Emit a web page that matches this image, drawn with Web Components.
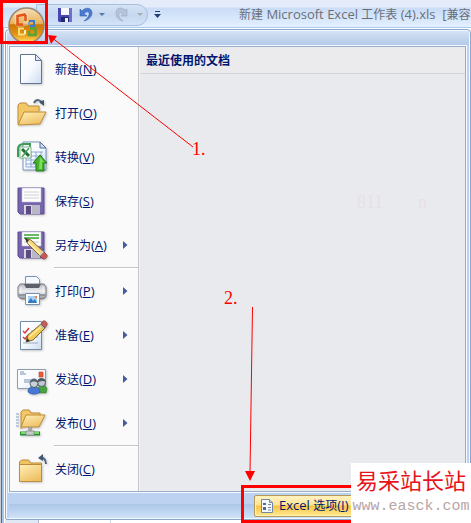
<!DOCTYPE html>
<html lang="zh-CN">
<head>
<meta charset="utf-8">
<title>新建 Microsoft Excel 工作表 (4).xls</title>
<style>
  body {
    margin: 0;
    overflow: hidden;
    font: 13px/16px "Open Sans", "Noto Sans CJK SC", sans-serif;
    color: #00156e;
  }
  /* 中文比西文小一号 */
  small { font-size: 12px; }
</style>
</head>
<body>
<office-window>
  <title-bar slot="title"><small>新建</small> Microsoft Excel <small>工作表</small> (4).xls&nbsp; [<small>兼容</small></title-bar>
  <office-menu>
    <menu-item icon="new"><small>新建</small>(<u>N</u>)</menu-item>
    <menu-item icon="open"><small>打开</small>(<u>O</u>)</menu-item>
    <menu-item icon="convert"><small>转换</small>(<u>V</u>)</menu-item>
    <menu-item icon="save"><small>保存</small>(<u>S</u>)</menu-item>
    <menu-item icon="saveas" more><small>另存为</small>(<u>A</u>)</menu-item>
    <menu-line></menu-line>
    <menu-item icon="print" more><small>打印</small>(<u>P</u>)</menu-item>
    <menu-item icon="prepare" more><small>准备</small>(<u>E</u>)</menu-item>
    <menu-item icon="send" more><small>发送</small>(<u>D</u>)</menu-item>
    <menu-item icon="publish" more><small>发布</small>(<u>U</u>)</menu-item>
    <menu-line></menu-line>
    <menu-item icon="close"><small>关闭</small>(<u>C</u>)</menu-item>
    <small slot="recent">最近使用的文档</small>
    <option-button slot="footer">Excel <small>选项</small>(<u>I</u>)</option-button>
  </office-menu>
  <office-button slot="over"></office-button>
  <step-marks slot="over"></step-marks>
  <site-mark slot="over">
    <span>易采站长站</span>
    <span slot="url">www.easck.com</span>
  </site-mark>
</office-window>

<script>
// 磁盘图标, 保存和另存为共用
const disk = `
  <path d="M2 3h26v26H4l-2-2z" fill="#7762ad" stroke="#5d4a94"/>
  <path d="M6 3h19v14H6z" fill="#fdfdfd" stroke="#c5c0d8" stroke-width=".6"/>
  <path d="M8 20h16v9H8z" fill="#d6d6de"/><path d="M10 21h5v8h-5z" fill="#5b4b80"/>
  <path d="M16 20h8v9h-8z" fill="#b9b8c6"/>`;

const pencil = `
  <path d="M9 9l3 6 14 14 4-4-15-14z" fill="#f5d77a" stroke="#77602c" stroke-width=".9"/>
  <path d="M11 12l15 15" stroke="#fff0b4" stroke-width="1.3"/>
  <path d="M9 9l4 2-2 3z" fill="#333"/>
  <path d="M24 27l4-4 3 3c1 2-2 5-4 4z" fill="#c95950" stroke="#774442" stroke-width=".7"/>
  <path d="M23 26l4-4 1 1-4 4z" fill="#c7d4cb"/>`;

const icons = {
  new: `
    <path d="M4.500 1.500h15l6 6v23h-21z" fill="url(#paper)" stroke="#62748f"/>
    <path d="M19.500 1.500v6h6z" fill="#dde9f8" stroke="#62748f"/>`,
  open: `
    <path d="M2 27V8l2-2h6l2 3h11v5" fill="#f3c765" stroke="#bd8b39"/>
    <path d="M2 28l6-13h22l-6 12z" fill="url(#fold)" stroke="#bd8b39"/>
    <path d="M18 6c2-4 7-4 8 1" fill="none" stroke="#51677f" stroke-width="2"/>
    <path d="M23 5l5 4 0-6z" fill="#405770"/>`,
  convert: `
    <path d="M7 1h17l6 6v22H7z" fill="url(#paper)" stroke="#7795be"/>
    <path d="M24 1v6h6z" fill="#cfe0f5" stroke="#536f96"/>
    <path d="M10 11h17M10 15h17M10 19h17M10 23h17M10 26h12M10 11v15M15 11v15M20 11v15M25 11v15" stroke="#8baad5"/>
    <path d="M2 16V8c0-4 3-5 6-5h6v4" fill="none" stroke="#3e9b52" stroke-width="2"/>
    <path d="M4 6h11v11H4z" fill="#fff" stroke="#7eb48a"/>
    <path d="M6 8l7 7" stroke="#206e33" stroke-width="3"/><path d="M13 7l-7 9" stroke="#49a25c" stroke-width="1.500"/>
    <path d="M24 14l7 8h-3v8h-8v-8h-3z" fill="#43b52c" stroke="#267319"/>
    <path d="M24 16l4 5h-2v7h-3z" fill="#82db5b"/>`,
  save: disk + `<path d="M8 7h15M8 10h15M8 13h15" stroke="#d2d2d2"/>`,
  saveas: disk + `<path d="M8 6h15M8 9h15" stroke="#36a333" stroke-width="1.500"/><path d="M8 13h15" stroke="#c8c8c8"/>` + pencil,
  print: `
    <path d="M9.500 12V1.500h11l3 3V12" fill="#f4f8ff" stroke="#7892b3"/>
    <path d="M4 9h24l2 3v8c0 3-2 4-5 4H7c-3 0-5-2-5-4v-8z" fill="url(#metal)" stroke="#777b83"/>
    <path d="M8 9h17l-2 4H10z" fill="#5d6066"/>
    <path d="M5 12v7M27 12v7" stroke="#f6f6f6"/>
    <path d="M3 20h26" stroke="#666a73"/>
    <path d="M9.500 18.500h14v11h-14z" fill="#fff" stroke="#7892b3"/>
    <path d="M12 21h9v7h-9z" fill="#a7d0f7"/><path d="M12 27l3-4 2 3 2-2 2 4h-9z" fill="#357bbd"/>
    <path d="M18 21h3v3z" fill="#e4864c"/>`,
  prepare: `
    <path d="M4.500 2.500h21v28h-21z" fill="url(#paper)" stroke="#758ba9"/>
    <path d="M7 12l2 2 4-5M7 18l2 2 4-5" fill="none" stroke="#d7383c" stroke-width="1.500"/>
    <path d="M7 24h15M15 12h6M15 18h7" stroke="#9cabc0"/>
    <path d="M10 23l2-7L25 5l4 4-12 12z" fill="#f3cb57" stroke="#7d662c"/>
    <path d="M13 18L26 7" stroke="#fff0a4" stroke-width="1.500"/>
    <path d="M10 23l1-4 3 3z" fill="#333"/>
    <path d="M25 5l2-3c2-1 5 2 4 4l-2 3z" fill="#c75d55" stroke="#7a4e4e" stroke-width=".7"/>
    <path d="M23 6l4 4 1-1-4-4z" fill="#aabdb6"/>`,
  send: `
    <path d="M1.500 6.500h28v19h-28z" fill="url(#paper)" stroke="#8e9cae"/>
    <path d="M4 9h4M4 11h6M8 17h9M8 19h7" stroke="#7890b5"/>
    <path d="M23 9h4v5h-4z" fill="#ef5c34" stroke="#c14325" stroke-width=".6"/>
    <path d="M22 30v-5c0-3 9-3 9 1l-1 4z" fill="#47a43e" stroke="#2d792b" stroke-width=".6"/>
    <circle cx="25.500" cy="19.500" r="4" fill="#c2cad0" stroke="#4f5d65"/>
    <path d="M21 20c0-6 8-6 9-1-3-2-6-1-9 1z" fill="#4d5b63"/>
    <path d="M12 29c0-5 3-5 6-5s6 1 6 5c-3 3-9 3-12 0z" fill="#4977d4" stroke="#2950a4" stroke-width=".6"/>
    <circle cx="18" cy="20.500" r="4" fill="#cbd2d7" stroke="#4f5d65"/>
    <path d="M14 20c0-6 8-6 8 0-3-2-5-2-8 0z" fill="#56666f"/>`,
  publish: `
    <path d="M0 7h3M0 10h3M0 13h3M0 16h3M0 19h3" stroke="#8ba2c4"/>
    <path d="M5 22V5l2-2h6l2 3h9v5" fill="#f3c765" stroke="#bd8b39"/>
    <path d="M5 20l5-12h19l-6 12z" fill="url(#fold)" stroke="#bd8b39"/>
    <path d="M14 20v5" stroke="#777" stroke-width="3"/><path d="M14 20v5" stroke="#ddd"/>
    <path d="M4 26.500h20" stroke="#268c34" stroke-width="4"/>
    <path d="M5 26h18" stroke="#76dd65" stroke-width="2"/>
    <rect x="10" y="24" width="8" height="4" fill="#c8cbd0" stroke="#777" stroke-width=".6"/>`,
  close: `
    <path d="M3.500 28V9l2-2h7l2 3h11v18z" fill="#f0c461" stroke="#bd8b39"/>
    <path d="M3.500 28.500v-17h22v17z" fill="url(#fold)" stroke="#bd8b39"/>
    <path d="M30 11c0-5-3-7-6-6" fill="none" stroke="#51677f" stroke-width="2"/>
    <path d="M22 5l5-4v7z" fill="#405770"/>`
};

const defs = `
  <defs>
    <linearGradient id="paper" x2="1" y2="1"><stop stop-color="#fff"/><stop offset=".5" stop-color="#f7faff"/><stop offset="1" stop-color="#cbdcf1"/></linearGradient>
    <linearGradient id="fold" x2=".6" y2="1"><stop stop-color="#fff0b8"/><stop offset="1" stop-color="#efc064"/></linearGradient>
    <linearGradient id="metal" x2="0" y2="1"><stop stop-color="#b9bdc5"/><stop offset=".5" stop-color="#eceef1"/><stop offset="1" stop-color="#8e939d"/></linearGradient>
  </defs>`;

function define(name, html) {
  customElements.define(name, class extends HTMLElement {
    constructor() {
      super();
      this.attachShadow({ mode: "open" }).innerHTML = html;
    }
  });
}

define("office-window", /*html*/`
  <style>
    :host {
      display: flex;
      flex-direction: column;
      position: relative;
      min-height: 100vh;
      overflow: hidden;
      background: linear-gradient(90deg, #c9ccd0 1px, #4a70a5 1px 2px, #a5c4ea 2px 4px, #fff 4px);
    }
    .body { flex: 1; display: flex; flex-direction: column; padding: 1px 0 0 5px; }
    .sheet {
      height: 3px;
      background: linear-gradient(90deg, #dfe8f5 33px, #aab8cc 33px 34px, #fff 34px 105px, #d0d7e5 105px 106px, #fff 106px);
    }
  </style>
  <slot name="title"></slot>
  <div class="body">
    <slot></slot>
    <div class="sheet"></div>
  </div>
  <slot name="over"></slot>
`);

define("title-bar", /*html*/`
  <style>
    :host {
      display: flex;
      align-items: center;
      box-sizing: border-box;
      height: 28px;
      padding: 2px 0 0 36px;
      border-bottom: 1px solid #a9cdef;
      background: linear-gradient(#e3ecf8 7px, #cadcf6 8px, #d9e8fb 20px, #e3f0ff);
      color: #696f79;
    }
    .quick {
      display: flex;
      align-items: center;
      box-sizing: border-box;
      width: 112px;
      height: 22px;
      padding-left: 20px;
      gap: 4px;
      border: 1px solid #a8bfdd;
      border-radius: 0 11px 11px 0;
      background: linear-gradient(#d5e3f5, #c5d8f0 50%, #d3e3f8);
    }
    button { display: flex; padding: 0; border: 0; background: none; }
    .redo { margin: 0 4px 0 6px; }
    .custom { margin-left: 6px; }
    .title {
      flex: 1;
      padding-left: 78px;
      overflow: hidden;
      white-space: nowrap;
    }
  </style>
  <div class="quick">
    <button aria-label="保存"><svg width="16" height="16" viewBox="0 0 16 16">
      <path d="M1 1h14v14H2l-1-1z" fill="#4845b5"/><path d="M4 1h8v7H4z" fill="#f7f9ff"/>
      <path d="M12 1h3v14h-3z" fill="#6f70cb"/><path d="M4 10h8v5H4z" fill="#222a68"/><path d="M8 11h3v4H8z" fill="#eef"/></svg></button>
    <button aria-label="撤消"><svg width="18" height="16" viewBox="0 0 18 16">
      <path d="M3 2v7h7L7 7c3-4 6-2 5 1-1 3-3 4-5 6 5-1 8-5 8-8 0-6-7-6-10-2z" fill="#4a7bd0" stroke="#3564b6" stroke-width=".6"/></svg></button>
    <button aria-label="撤消列表"><svg width="6" height="4"><path d="M0 0h6L3 3z" fill="#5379ad"/></svg></button>
    <button class="redo" aria-label="重做"><svg width="14" height="16" viewBox="0 0 14 16">
      <path d="M12 2v7H6l2-2C5 4 3 6 4 9c0 2 2 3 4 5-5-1-7-4-7-8 0-6 6-6 9-3z" fill="#b5c2d7" stroke="#98aac6" stroke-width=".6"/></svg></button>
    <button aria-label="重做列表"><svg width="6" height="4"><path d="M0 0h6L3 3z" fill="#a8acb4"/></svg></button>
  </div>
  <button class="custom" aria-label="自定义"><svg width="7" height="8"><path d="M1 0h5v1H1zM0 3h7L3.500 7z" fill="#243f75"/></svg></button>
  <div class="title"><slot></slot></div>
`);

define("office-menu", /*html*/`
  <style>
    :host {
      flex: 1;
      display: flex;
      flex-direction: column;
      padding: 16px 4px 1px 3px;
      border: 1px solid #8aa7cd;
      border-radius: 4px 4px 2px 2px;
      box-shadow: inset 0 0 0 1px #f2f8ff;
      background: linear-gradient(#d7e4f4, #b4cae8 15px, #bed3f1 16px, #bcd2f0);
    }
    .panes {
      flex: 1;
      display: flex;
      border: 1px solid #9aaecb;
      box-shadow: 0 0 0 1px #f4f9ff;
    }
    .left {
      flex: none;
      width: 128px;
      border-right: 1px solid #c5c5c5;
      background: #fafafa;
    }
    .right { flex: 1; border-left: 1px solid #f5f5f5; background: #e9eaee; }
    h2 {
      margin: 0;
      padding: 5px 6px 4px;
      border-bottom: 1px solid #d3d6d9;
      background: #ebebee;
      font: inherit;
      font-weight: 700;
    }
    footer {
      display: flex;
      align-items: center;
      height: 25px;
      padding-left: 245px;
      margin-top: 1px;
      background: linear-gradient(#bcd2f0 11px, #abc6e8 11px, #cfe2f7);
    }
  </style>
  <div class="panes">
    <nav class="left"><slot></slot></nav>
    <section class="right"><h2><slot name="recent"></slot></h2></section>
  </div>
  <footer><slot name="footer"></slot></footer>
`);

class MenuItem extends HTMLElement {
  constructor() {
    super();
    this.attachShadow({ mode: "open" });
  }

  connectedCallback() {
    this.shadowRoot.innerHTML = /*html*/`
      <style>
        :host { display: block; }
        button {
          display: flex;
          align-items: center;
          gap: 7px;
          width: 100%;
          height: 44px;
          padding: 0 10px 0 6px;
          border: 0;
          background: none;
          font: inherit;
          color: inherit;
          text-align: left;
        }
        .icon { flex: none; filter: drop-shadow(1px 1px 1px #0003); }
        .label { flex: 1; white-space: nowrap; }
      </style>
      <button>
        <svg class="icon" width="32" height="32" viewBox="0 0 32 32">${defs}${icons[this.getAttribute("icon")]}</svg>
        <span class="label"><slot></slot></span>
        ${this.hasAttribute("more") ? `<svg width="5" height="8"><path d="M0 0l4.500 4L0 8z" fill="#45599b"/></svg>` : ""}
      </button>
    `;
  }
}
customElements.define("menu-item", MenuItem);

define("menu-line", /*html*/`
  <style>
    :host { display: block; height: 1px; margin-left: 44px; border-bottom: 1px solid #fff; background: #c5c5c5; }
  </style>
`);

define("option-button", /*html*/`
  <style>
    button {
      display: flex;
      align-items: center;
      gap: 5px;
      width: 106px;
      height: 22px;
      padding: 0 5px;
      border: 1px solid #b29a5b;
      border-radius: 2px;
      box-shadow: inset 0 0 0 1px #fff0b5;
      background: linear-gradient(#fff3c5, #ffe391 45%, #f8c444 50%, #ffe98f);
      font: inherit;
      color: inherit;
      white-space: nowrap;
    }
    svg { flex: none; }
  </style>
  <button>
    <svg width="14" height="14" viewBox="0 0 14 14">
      <path d="M1.500 .5h8l3 3v10h-11z" fill="#f4f8ff" stroke="#7286a5"/><path d="M9.500 .5v3h3" fill="#c4d4e8" stroke="#7286a5"/>
      <path d="M3 4h3v2H3zM3 8h3v3H3z" fill="#556c8b"/><path d="M8 5.500h3M8 8.500h3M8 11h3" stroke="#78899f"/>
    </svg>
    <span><slot></slot></span>
  </button>
`);

define("office-button", /*html*/`
  <style>
    :host { position: absolute; left: 8px; top: 7px; }
    button { display: block; padding: 0; border: 0; background: none; }
    svg { display: block; }
  </style>
  <button aria-label="Office 按钮">
    <svg width="37" height="37" viewBox="0 0 37 37">
      <defs>
        <linearGradient id="ball" x2="0" y2="1">
          <stop stop-color="#f4e0bd"/><stop offset=".44" stop-color="#e9b25a"/>
          <stop offset=".48" stop-color="#c97707"/><stop offset=".75" stop-color="#e8930f"/><stop offset="1" stop-color="#ffe36b"/>
        </linearGradient>
      </defs>
      <circle cx="18.500" cy="18.500" r="17.500" fill="url(#ball)" stroke="#9b8873" stroke-width="1.500"/>
      <g fill="none">
        <path d="M8.500 8l8-1 1.500 2v8l-8 1-1.500-2z" stroke="#fff" stroke-width="4" opacity=".3"/>
        <path d="M15 17.500H9.500V9l7-1.500 1 1.500v5" stroke="#e65318" stroke-width="2.500"/>
        <path d="M21 14h5v5h-4" stroke="#3c7cc4" stroke-width="2"/><path d="M21 15v3" stroke="#6aa5dc" stroke-width="2"/>
        <path d="M16 21.500h-5v6h6" stroke="#f6e07a" stroke-width="2"/><path d="M17 23v4" stroke="#f8efb8" stroke-width="2"/>
        <path d="M22 21.500h5.500v6.500H21v-4" stroke="#56a338" stroke-width="2.500"/>
      </g>
    </svg>
  </button>
`);

// 红色标注: 方框, 箭头和序号
define("step-marks", /*html*/`
  <style>
    :host { position: absolute; left: 0; top: 0; pointer-events: none; }
    svg { display: block; }
    text { font: 18px "Liberation Serif", serif; fill: #f00; }
    .faint { fill: #e7e1e5; }
  </style>
  <svg width="471" height="523">
    <text class="faint" x="357" y="208">811</text>
    <text class="faint" x="418" y="208">n</text>
    <g fill="none" stroke="#f00">
      <path d="M1.500 1.500h45v41h-45zM354 486.500H242.500v35H354z" stroke-width="3"/>
      <path d="M51 37L193 147"/>
      <path d="M252.500 307L250 472"/>
    </g>
    <path d="M48 35l9 1-6 8zM245 471h10l-5 10z" fill="#f00"/>
    <text x="192" y="155">1.</text>
    <text x="224" y="304">2.</text>
  </svg>
`);

define("site-mark", /*html*/`
  <style>
    :host {
      display: flex;
      flex-direction: column;
      align-items: center;
      position: absolute;
      right: 0;
      bottom: 0;
      box-sizing: border-box;
      width: 120px;
      height: 60px;
      padding-top: 4px;
      background: #fff;
    }
    .name { font: 22px/30px "Liberation Serif", "Noto Sans CJK SC", serif; color: #e8131c; }
    .url { font: 15px/20px "Liberation Mono", monospace; color: #b9a5a7; }
  </style>
  <div class="name"><slot></slot></div>
  <div class="url"><slot name="url"></slot></div>
`);
</script>
</body>
</html>
